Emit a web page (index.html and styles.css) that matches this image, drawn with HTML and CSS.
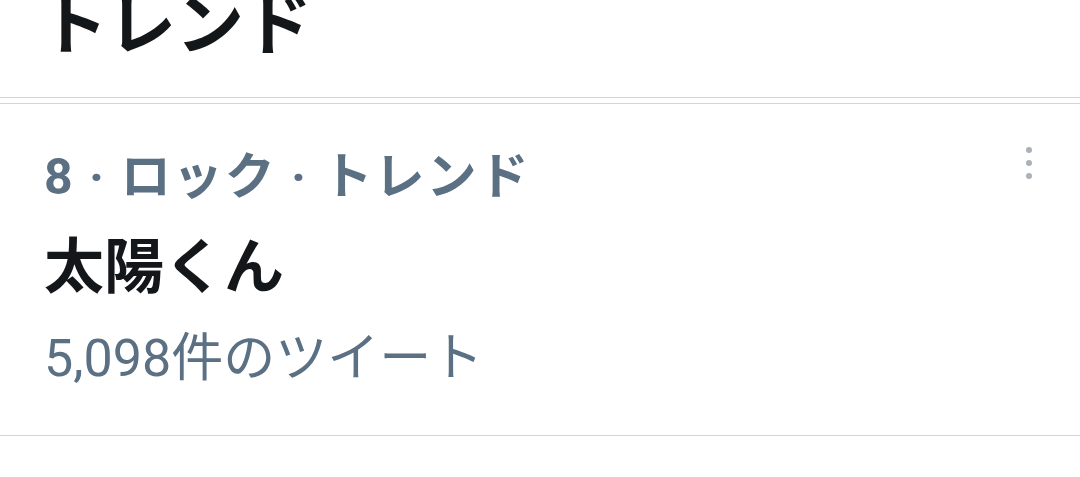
FILE: index.html
```html
<!DOCTYPE html>
<html lang="ja">
<head>
<meta charset="utf-8">
<link rel="stylesheet" href="styles.css">
</head>
<body>
<div class="page">
  <header class="header">
    <h1 class="title">トレンド</h1>
  </header>
  <section class="trend">
    <div class="trend-body">
      <div class="meta">8 · ロック · トレンド</div>
      <div class="name">太陽くん</div>
      <div class="count">5,098件のツイート</div>
    </div>
    <div class="more" aria-label="more">
      <span class="dot"></span><span class="dot"></span><span class="dot"></span>
    </div>
  </section>
</div>
</body>
</html>
```

FILE: styles.css
```css
html, body {
  margin: 0;
  padding: 0;
  background: #ffffff;
}
body {
  font-family: Roboto, "Noto Sans CJK JP", sans-serif;
  width: 1080px;
  height: 477px;
  overflow: hidden;
}
.page {
  display: flex;
  flex-direction: column;
}
.header {
  height: 98px;
  border-bottom: 1px solid #d3d6d9;
  overflow: hidden;
  display: flex;
  align-items: flex-end;
  padding-left: 40px;
  box-sizing: border-box;
}
.title {
  margin: 0 0 37px 0;
  font-size: 68px;
  line-height: 68px;
  font-weight: 700;
  color: #14171a;
}
.trend {
  margin-top: 5px;
  border-top: 1px solid #d3d6d9;
  border-bottom: 1px solid #d3d6d9;
  height: 333px;
  box-sizing: border-box;
  display: flex;
  justify-content: space-between;
  padding: 0 48px 0 44px;
}
.trend-body {
  display: flex;
  flex-direction: column;
  padding-top: 43px;
}
.meta {
  font-size: 50px;
  line-height: 60px;
  font-weight: 700;
  letter-spacing: 2px;
  color: #5b7083;
}
.name {
  margin-top: 22px;
  font-size: 60px;
  line-height: 78px;
  font-weight: 700;
  color: #14171a;
}
.count {
  margin-top: 17px;
  font-size: 52px;
  line-height: 70px;
  font-weight: 400;
  color: #5b7083;
}
.more {
  display: flex;
  flex-direction: column;
  gap: 7px;
  padding-top: 43px;
}
.dot {
  width: 6px;
  height: 6px;
  border-radius: 50%;
  background: #aab1b8;
}
```
